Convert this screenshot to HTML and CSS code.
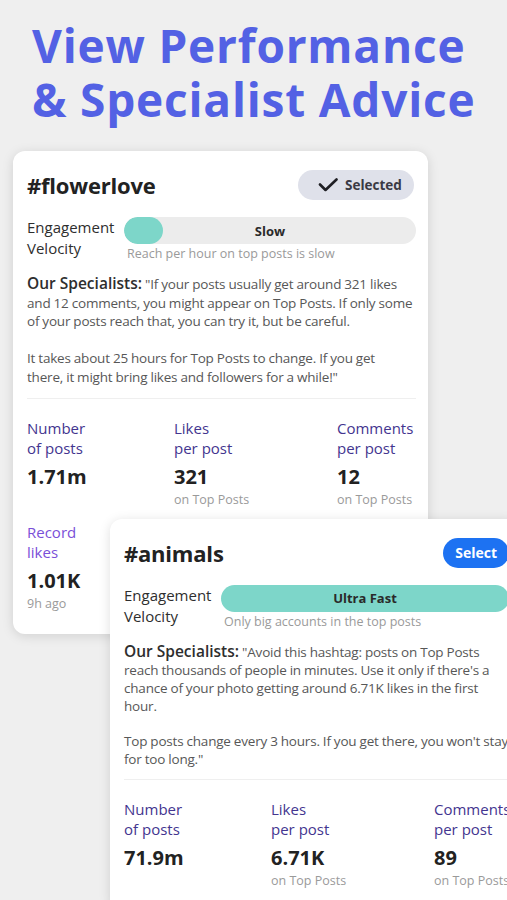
FILE: index.html
```html
<!DOCTYPE html>
<html lang="en">
<head>
<meta charset="utf-8">
<title>View Performance &amp; Specialist Advice</title>
<link rel="stylesheet" href="styles.css">
</head>
<body>
<div class="page">
  <h1 class="headline">View Performance<br>&amp; Specialist Advice</h1>

  <section class="card card-back">
    <div class="card-head">
      <h2 class="tag">#flowerlove</h2>
      <span class="pill pill-selected">
        <svg class="check" width="20" height="14" viewBox="0 0 20 14" aria-hidden="true"><polyline points="2,6.5 7.5,12 18.5,1.5" fill="none" stroke="#1f1f24" stroke-width="2.6" stroke-linecap="round" stroke-linejoin="round"/></svg>
        Selected
      </span>
    </div>
    <div class="velocity">
      <div class="velocity-label">Engagement<br>Velocity</div>
      <div class="velocity-main">
        <div class="bar"><span class="bar-knob"></span><span class="bar-text">Slow</span></div>
        <div class="bar-caption">Reach per hour on top posts is slow</div>
      </div>
    </div>
    <div class="advice">
      <p><b>Our Specialists:</b> "If your posts usually get around 321 likes<br>and 12 comments, you might appear on Top Posts. If only some<br>of your posts reach that, you can try it, but be careful.</p>
      <p>It takes about 25 hours for Top Posts to change. If you get<br>there, it might bring likes and followers for a while!"</p>
    </div>
    <hr class="divider">
    <div class="stats">
      <div class="stat"><div class="stat-label">Number<br>of posts</div><div class="stat-value">1.71m</div></div>
      <div class="stat"><div class="stat-label">Likes<br>per post</div><div class="stat-value">321</div><div class="stat-sub">on Top Posts</div></div>
      <div class="stat"><div class="stat-label">Comments<br>per post</div><div class="stat-value">12</div><div class="stat-sub">on Top Posts</div></div>
      <div class="stat"><div class="stat-label stat-label-record">Record<br>likes</div><div class="stat-value">1.01K</div><div class="stat-sub">9h ago</div></div>
    </div>
  </section>

  <section class="card card-front">
    <div class="card-head">
      <h2 class="tag">#animals</h2>
      <span class="pill pill-select">Select</span>
    </div>
    <div class="velocity">
      <div class="velocity-label">Engagement<br>Velocity</div>
      <div class="velocity-main">
        <div class="bar bar-full"><span class="bar-text">Ultra Fast</span></div>
        <div class="bar-caption">Only big accounts in the top posts</div>
      </div>
    </div>
    <div class="advice advice-tight">
      <p><b>Our Specialists:</b> "Avoid this hashtag: posts on Top Posts<br>reach thousands of people in minutes. Use it only if there's a<br>chance of your photo getting around 6.71K likes in the first<br>hour.</p>
      <p>Top posts change every 3 hours. If you get there, you won't stay<br>for too long."</p>
    </div>
    <hr class="divider">
    <div class="stats">
      <div class="stat"><div class="stat-label">Number<br>of posts</div><div class="stat-value">71.9m</div></div>
      <div class="stat"><div class="stat-label">Likes<br>per post</div><div class="stat-value">6.71K</div><div class="stat-sub">on Top Posts</div></div>
      <div class="stat"><div class="stat-label">Comments<br>per post</div><div class="stat-value">89</div><div class="stat-sub">on Top Posts</div></div>
    </div>
  </section>
</div>
</body>
</html>
```

FILE: styles.css
```css
html, body {
  margin: 0;
  padding: 0;
  overflow: hidden;
}

body {
  background: #efefef;
  font-family: "Open Sans", "Liberation Sans", sans-serif;
  color: #333;
  width: 507px;
  height: 900px;
}

.page {
  display: flex;
  flex-direction: column;
  align-items: flex-start;
}

.headline {
  margin: 18px 0 0 32px;
  font-family: "Open Sans", sans-serif;
  font-weight: 700;
  font-size: 46px;
  line-height: 54px;
  letter-spacing: 0.8px;
  color: #5361e4;
  white-space: nowrap;
}

.card {
  position: relative;
  box-sizing: border-box;
  background: #fff;
  border-radius: 12px;
  box-shadow: 0 2px 12px rgba(0, 0, 0, 0.13);
  padding: 19px 12px 21px 14px;
  flex-shrink: 0;
}

.card-back {
  margin: 25px 0 0 13px;
  width: 415px;
}

.card-front {
  z-index: 1;
  margin: -115px 0 0 110px;
  width: 411px;
}

.card-head {
  display: flex;
  align-items: center;
  justify-content: space-between;
  height: 30px;
}

.tag {
  margin: 0;
  font-size: 22px;
  font-weight: 700;
  line-height: 30px;
  color: #222;
  letter-spacing: -0.2px;
}

.pill {
  display: flex;
  align-items: center;
  height: 30px;
  box-sizing: border-box;
  border-radius: 15px;
  font-size: 13.5px;
  font-weight: 700;
}

.pill-selected {
  width: 116px;
  margin-right: 2px;
  padding: 0 0 0 20px;
  gap: 7px;
  background: #dfe1ea;
  color: #3a3a44;
}

.check {
  display: block;
}

.pill-select {
  padding: 0 12px;
  background: #1d72f2;
  color: #fff;
  font-size: 14px;
}

.velocity {
  display: flex;
  align-items: flex-start;
  margin-top: 17px;
}

.velocity-label {
  width: 97px;
  flex-shrink: 0;
  font-size: 15px;
  line-height: 21px;
  font-weight: 500;
  color: #2e2e2e;
}

.velocity-main {
  flex: 1;
}

.bar {
  position: relative;
  display: flex;
  align-items: center;
  justify-content: center;
  height: 27px;
  border-radius: 14px;
  background: #ececec;
  overflow: hidden;
}

.bar-knob {
  position: absolute;
  left: 0;
  top: 0;
  bottom: 0;
  width: 39px;
  border-radius: 14px;
  background: #7dd6c9;
}

.bar-full {
  background: #7dd6c9;
}

.bar-text {
  position: relative;
  font-size: 13px;
  font-weight: 700;
  color: #2a2a2a;
}

.bar-caption {
  margin: 1px 0 0 3px;
  font-size: 12.5px;
  line-height: 17px;
  color: #9a9a9a;
}

.advice {
  margin-top: 12px;
  font-size: 13.5px;
  line-height: 18.6px;
  letter-spacing: -0.2px;
  word-spacing: -0.2px;
  white-space: nowrap;
  color: #575757;
}

.advice p {
  margin: 0 0 18.6px;
}

.advice p:last-child {
  margin-bottom: 0;
}

.advice-tight {
  line-height: 18px;
}

.advice-tight p {
  margin-bottom: 17px;
}

.advice b {
  font-size: 15.5px;
  line-height: 18px;
  font-weight: 600;
  letter-spacing: 0;
  word-spacing: 0;
  color: #2e2e2e;
}

.divider {
  margin: 11px 0 0;
  border: 0;
  border-top: 1px solid #efefef;
}

.stats {
  display: grid;
  grid-template-columns: 147px 163px auto;
  row-gap: 13px;
  margin-top: 19px;
}

.stat-label {
  font-size: 15px;
  line-height: 20.5px;
  font-weight: 500;
  color: #43358f;
}

.stat-label-record {
  color: #7a4fd8;
}

.stat-value {
  margin-top: 4px;
  font-size: 20px;
  line-height: 28px;
  font-weight: 700;
  color: #222;
}

.stat-sub {
  font-size: 12.5px;
  line-height: 18px;
  color: #9a9a9a;
}
```
